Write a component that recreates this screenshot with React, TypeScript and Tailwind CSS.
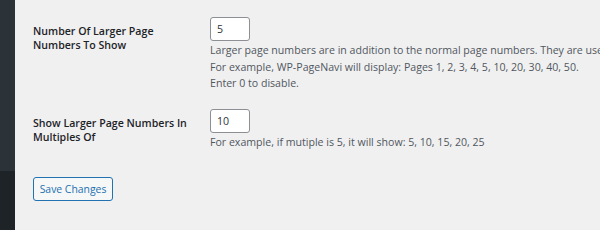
import React from 'react';

const App: React.FC = () => {
  return (
    <div className="flex w-[600px] h-[230px] overflow-hidden bg-[#f0f0f1] font-['Open_Sans',sans-serif]">
      {/* Admin sidebar edge */}
      <div className="flex flex-col w-[15px] shrink-0">
        <div className="h-[171px] bg-[#2c3338]" />
        <div className="flex-1 bg-[#1d2327]" />
      </div>

      <div className="flex-1 pl-[18px] pt-[15px] min-w-0">
        {/* Row 1 */}
        <div className="flex">
          <div className="w-[177px] shrink-0 pt-[9px] text-[10.6px] leading-[14px] font-semibold text-[#1d2327]">
            Number Of Larger Page<br />Numbers To Show
          </div>
          <div className="flex-1 min-w-0 whitespace-nowrap overflow-hidden">
            <input
              type="text"
              defaultValue="5"
              className="w-[40px] h-[24px] px-[6px] rounded-[3px] border border-[#8c8f94] bg-white text-[10.6px] text-[#2c3338] outline-none"
            />
            <p className="text-[10.6px] leading-[16.5px] text-[#50575e] mt-[1px]">
              Larger page numbers are in addition to the normal page numbers. They are useful when there are many pages of posts.<br />
              For example, WP-PageNavi will display: Pages 1, 2, 3, 4, 5, 10, 20, 30, 40, 50.<br />
              Enter 0 to disable.
            </p>
          </div>
        </div>

        {/* Row 2 */}
        <div className="flex mt-[15px]">
          <div className="w-[177px] shrink-0 pt-[9px] text-[10.6px] leading-[14px] font-semibold text-[#1d2327]">
            Show Larger Page Numbers In<br />Multiples Of
          </div>
          <div className="flex-1 min-w-0 whitespace-nowrap">
            <input
              type="text"
              defaultValue="10"
              className="w-[40px] h-[24px] px-[6px] rounded-[3px] border border-[#8c8f94] bg-white text-[10.6px] text-[#2c3338] outline-none"
            />
            <p className="text-[10.6px] leading-[16.5px] text-[#50575e] mt-[1px]">
              For example, if mutiple is 5, it will show: 5, 10, 15, 20, 25
            </p>
          </div>
        </div>

        <button className="mt-[27px] h-[24px] w-[80px] rounded-[3px] border border-[#2271b1] bg-[#f6f7f7] text-[#2271b1] text-[10.4px] leading-none">
          Save Changes
        </button>
      </div>
    </div>
  );
};

export default App;
